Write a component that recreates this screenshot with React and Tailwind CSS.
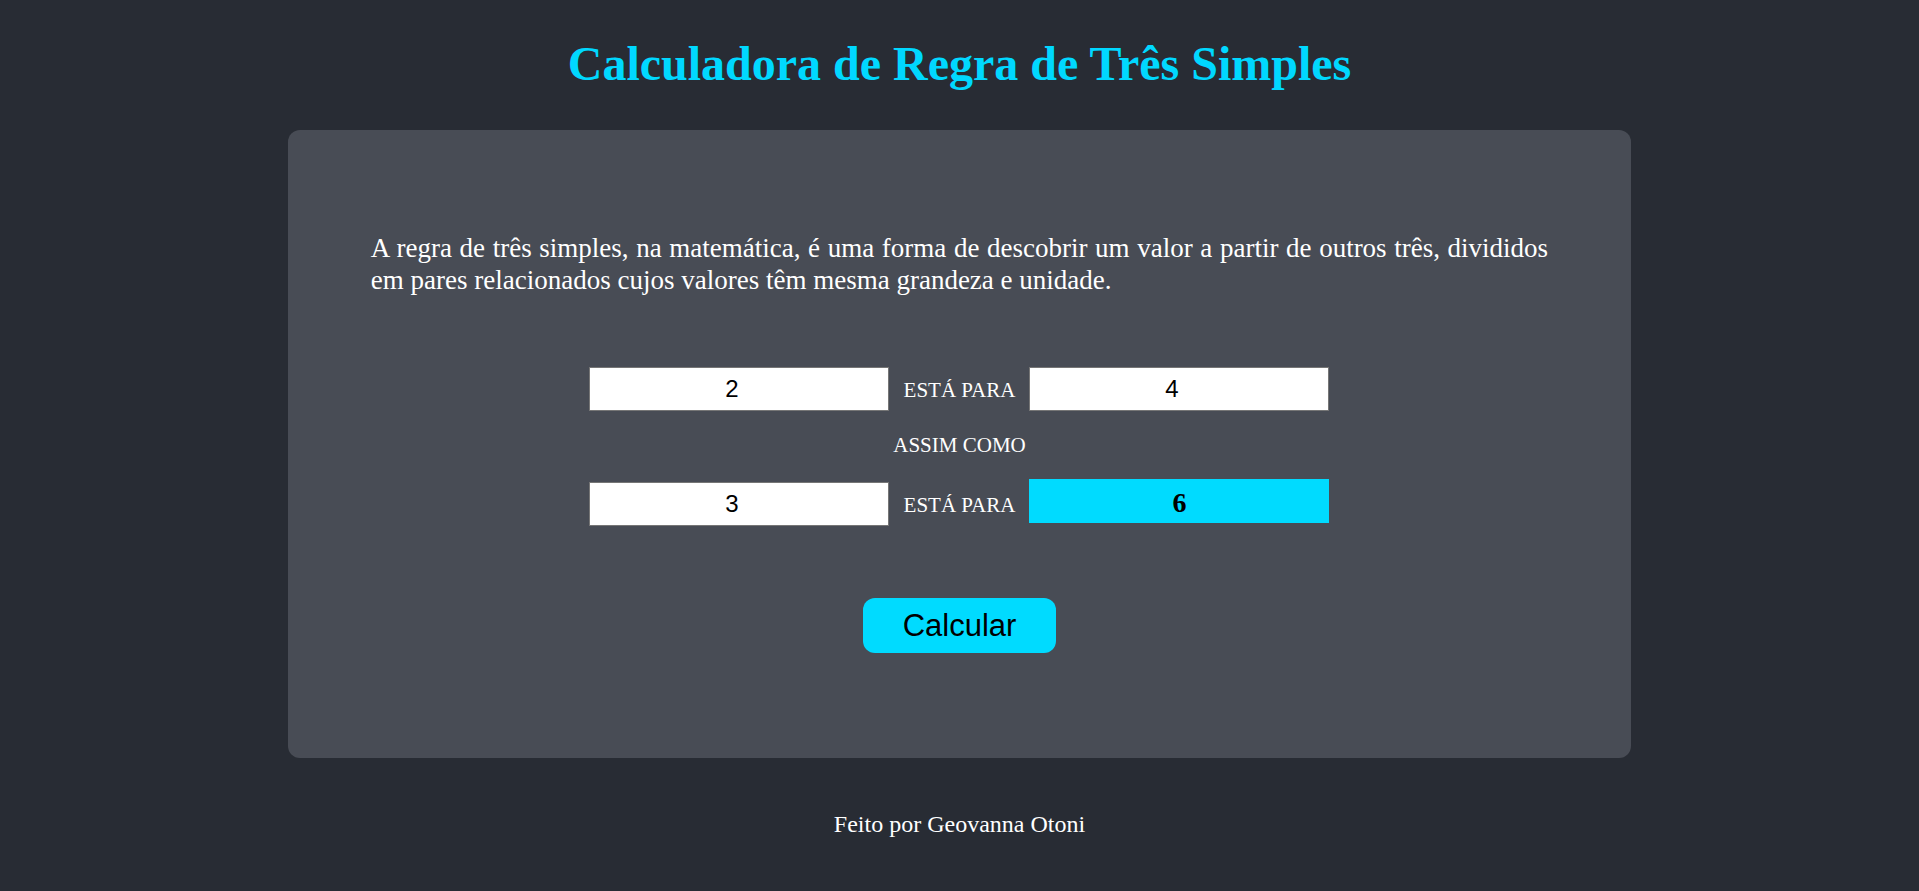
import React, { useState } from 'react';

const serif = "font-['Liberation_Serif','Times_New_Roman',serif]";
const sans = "font-['Liberation_Sans',Arial,sans-serif]";

export default function App() {
  const [a, setA] = useState('2');
  const [b, setB] = useState('4');
  const [c, setC] = useState('3');
  const [result, setResult] = useState('6');

  const calcular = () => {
    const x = parseFloat(a);
    const y = parseFloat(b);
    const z = parseFloat(c);
    if (!x || isNaN(y) || isNaN(z)) return;
    setResult(String(Math.round(((y * z) / x) * 100) / 100));
  };

  return (
    <div className={`min-h-[891px] bg-[#282c34] text-white ${serif} flex flex-col items-center`}>
      {/* Title */}
      <h1 className="mt-[36px] text-[48px] leading-[55px] font-bold text-[#00d8ff]">
        Calculadora de Regra de Três Simples
      </h1>

      {/* Card */}
      <div className="mt-[39px] w-[70%] bg-[#484c55] rounded-xl pt-[103px] pb-[105px] flex flex-col items-center">
        <p className="self-stretch px-[83px] text-[27px] leading-[31.5px] text-justify text-white">
          A regra de três simples, na matemática, é uma forma de descobrir um valor a partir de outros três, divididos em pares relacionados cujos valores têm mesma grandeza e unidade.
        </p>

        <div className="mt-[71px] flex items-baseline">
          <input
            type="number"
            value={a}
            onChange={(e) => setA(e.target.value)}
            className={`w-[300px] h-[44px] bg-white border border-[#767676] text-black text-center text-[24px] ${sans} outline-none`}
          />
          <span className="w-[140px] text-center text-[21px] leading-[24px] text-white">ESTÁ PARA</span>
          <input
            type="number"
            value={b}
            onChange={(e) => setB(e.target.value)}
            className={`w-[300px] h-[44px] bg-white border border-[#767676] text-black text-center text-[24px] ${sans} outline-none`}
          />
        </div>

        <span className="mt-[22px] text-[21px] leading-[24px] text-white">ASSIM COMO</span>

        <div className="mt-[22px] flex items-baseline">
          <input
            type="number"
            value={c}
            onChange={(e) => setC(e.target.value)}
            className={`w-[300px] h-[44px] bg-white border border-[#767676] text-black text-center text-[24px] ${sans} outline-none`}
          />
          <span className="w-[140px] text-center text-[21px] leading-[24px] text-white">ESTÁ PARA</span>
          <div className="w-[300px] h-[44px] pt-[8px] bg-[#00dbff] text-black text-center text-[28px] leading-[32px] font-bold">
            {result}
          </div>
        </div>

        <button
          onClick={calcular}
          className={`mt-[72px] px-[40px] py-[9px] rounded-xl bg-[#00dbff] text-black text-[31px] leading-[37px] ${sans} cursor-pointer`}
        >
          Calcular
        </button>
      </div>

      {/* Footer */}
      <p className="mt-[52px] text-[24px] leading-[28px] text-white">Feito por Geovanna Otoni</p>
    </div>
  );
}
